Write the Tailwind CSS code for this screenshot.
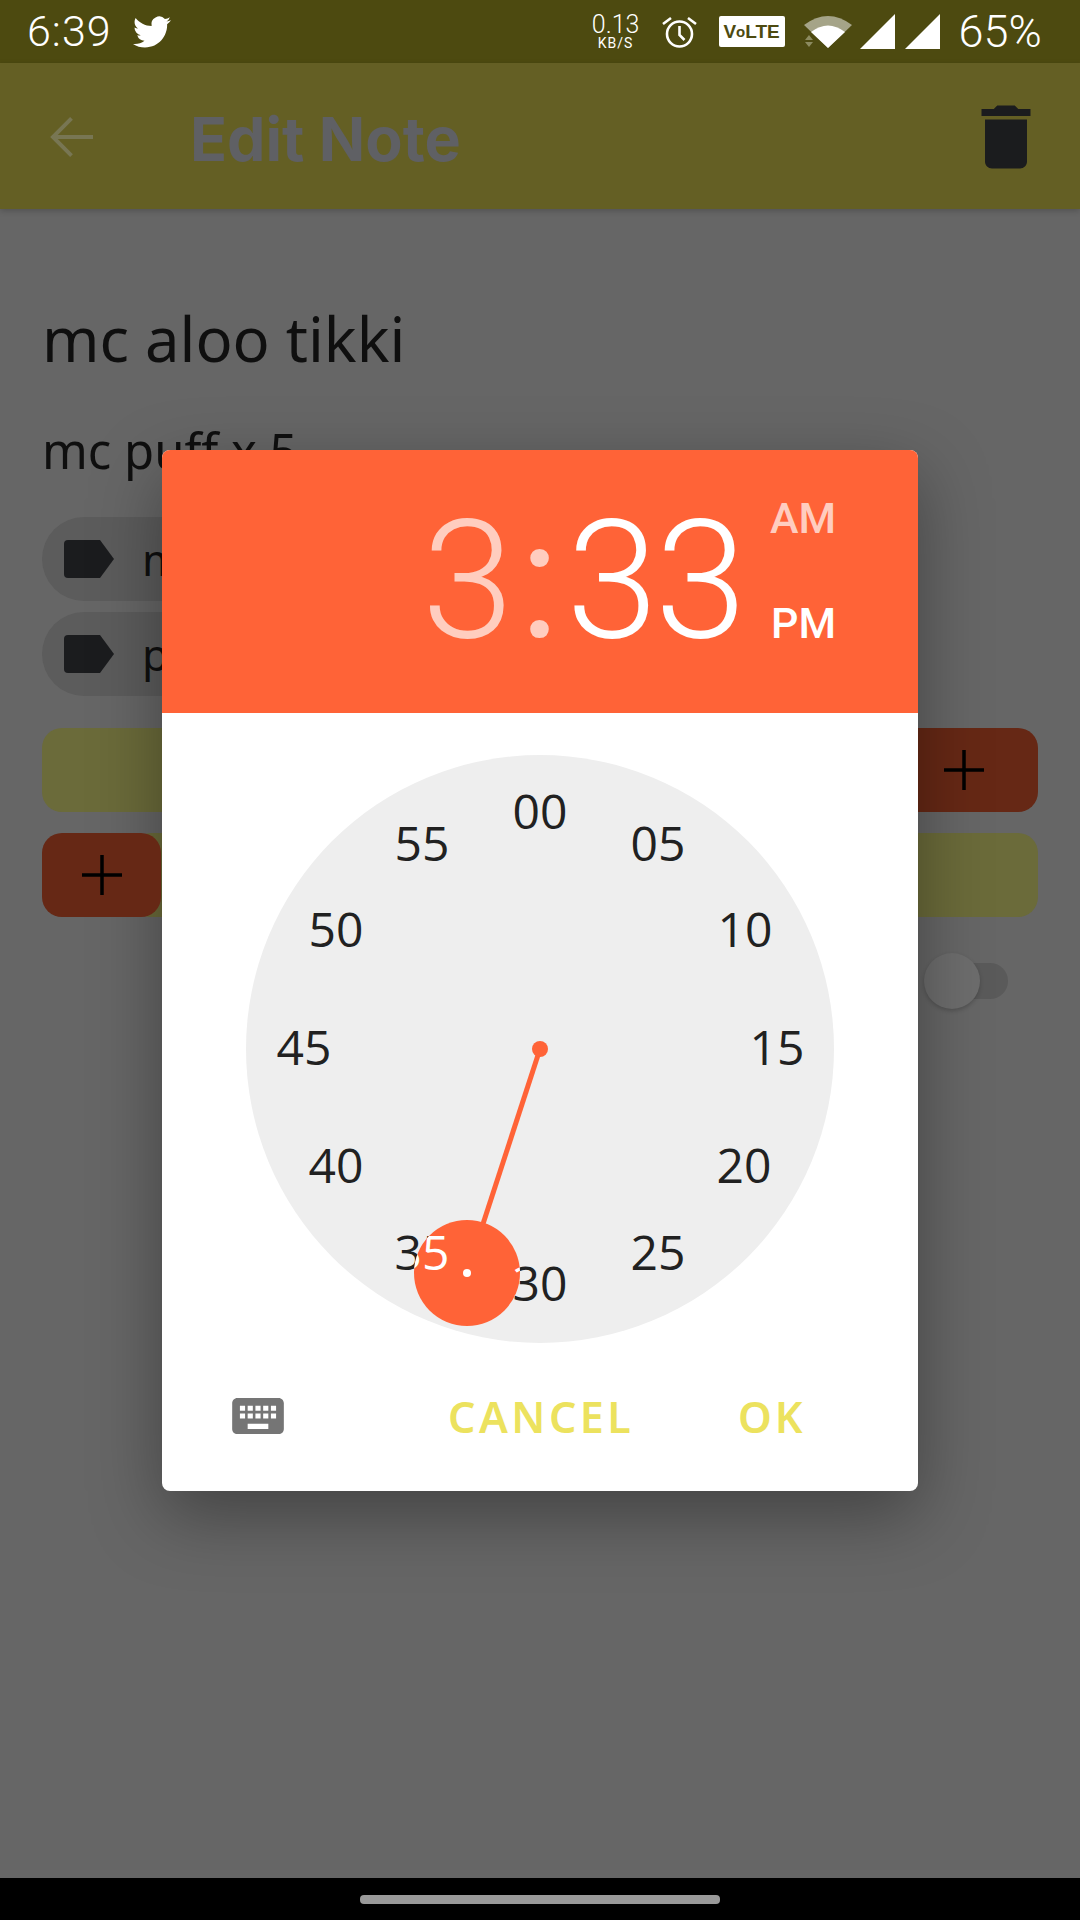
<!DOCTYPE html>
<html><head><meta charset="utf-8">
<script src="https://cdn.jsdelivr.net/npm/@tailwindcss/browser@4"></script>
</head>
<body class="m-0">
<div class="relative w-[1080px] h-[1920px] overflow-hidden bg-[#666666] flex flex-col font-['Noto_Sans',sans-serif]">
  <!-- status bar -->
  <div class="h-[63px] shrink-0 bg-[#4d4a10] flex items-center pl-[27px] text-white">
    <span class="font-['Roboto',sans-serif] text-[43px] leading-none tracking-[1px] font-light">6:39</span>
    <svg class="ml-[21px] w-[38px] h-[38px]" viewBox="0 0 24 24" fill="#fff"><path d="M23.953 4.57a10 10 0 01-2.825.775 4.958 4.958 0 002.163-2.723c-.951.555-2.005.959-3.127 1.184a4.92 4.92 0 00-8.384 4.482C7.69 8.095 4.067 6.13 1.64 3.162a4.822 4.822 0 00-.666 2.475c0 1.71.87 3.213 2.188 4.096a4.904 4.904 0 01-2.228-.616v.06a4.923 4.923 0 003.946 4.827 4.996 4.996 0 01-2.212.085 4.936 4.936 0 004.604 3.417 9.867 9.867 0 01-6.102 2.105c-.39 0-.779-.023-1.17-.067a13.995 13.995 0 007.557 2.209c9.053 0 13.998-7.496 13.998-13.985 0-.21 0-.42-.015-.63A9.935 9.935 0 0024 4.59z"/></svg>
    <div class="ml-[420px] w-[50px] flex flex-col items-center font-['Roboto',sans-serif] leading-none">
      <span class="text-[25px] leading-[22px] font-light">0.13</span>
      <span class="text-[14px] leading-[14px] tracking-[1px]">KB/S</span>
    </div>
    <svg class="ml-[20px] w-[37px] h-[34px]" viewBox="0 0 37 34" fill="none" stroke="#fff" stroke-width="2.6"><circle cx="18.5" cy="19" r="12.5"/><path d="M18.5 11v9l5 5M2 9l8-6M35 9l-8-6"/></svg>
    <div class="ml-[21px] w-[66px] h-[31px] bg-white rounded-[2px] flex items-center justify-center text-[#4d4a10] font-['Liberation_Sans',sans-serif] font-bold text-[19px] leading-none">
      <span>V</span><span class="text-[15px]">o</span><span>LTE</span>
    </div>
    <svg class="ml-[18px] w-[52px] h-[34px]" viewBox="0 0 52 34"><path d="M1 10 Q25 -8 49 10 L25 33Z" fill="#a5a488"/><path d="M8 17 Q25 4 42 17 L25 33Z" fill="#fff"/><path d="M2 25l4-5 4 5zM2 27l4 5 4-5z" fill="#8c8b60"/></svg>
    <svg class="ml-[5px] w-[35px] h-[35px]" viewBox="0 0 35 35"><path d="M0 35L35 0v35z" fill="#fff"/></svg>
    <svg class="ml-[10px] w-[35px] h-[35px]" viewBox="0 0 35 35"><path d="M0 35L35 0v35z" fill="#fff"/></svg>
    <span class="ml-[19px] font-['Roboto',sans-serif] text-[45px] leading-none font-light">65%</span>
  </div>
  <!-- app bar -->
  <div class="h-[146px] shrink-0 bg-[#645f24] flex items-center shadow-[0_2px_6px_rgba(0,0,0,0.2)] pl-[50px] pr-[48px]">
    <svg class="w-[43px] h-[42px] mt-[2px]" viewBox="0 0 44 42" fill="none" stroke="#787653" stroke-width="4"><path d="M44 21H3M22 2L3 21l19 19"/></svg>
    <span class="ml-[97px] mt-[6px] font-['Inter',sans-serif] font-bold text-[61px] leading-none text-[#5f6064]">Edit Note</span>
    <svg class="ml-auto w-[84px] h-[84px] -mr-[16px] mt-[2px]" viewBox="0 0 24 24" fill="#1b1c1e"><path d="M19 4h-3.5l-1-1h-5l-1 1H5v2h14V4zM6 19c0 1.1.9 2 2 2h8c1.1 0 2-.9 2-2V7H6v12z"/></svg>
  </div>
  <!-- note body, dimmed -->
  <div class="flex flex-col px-[42px] pt-[92px]">
    <div class="text-[61.5px] leading-[74px] text-[#0f0f0f]">mc aloo tikki</div>
    <div class="mt-[42px] text-[49px] leading-[66px] text-[#0f0f0f]">mc puff x 5</div>
    <div class="mt-[34px] flex flex-col gap-[11px] w-[400px]">
      <div class="h-[84px] rounded-[42px] bg-[#5c5c5c] flex items-center pl-[22px]">
        <svg class="w-[52px] h-[38px]" viewBox="0 0 52 38" fill="#1b1c1e"><path d="M4 0h32l14 19-14 19H4a4 4 0 01-4-4V4a4 4 0 014-4z"/></svg>
        <span class="ml-[26px] text-[44px] text-[#0f0f0f]">mc</span>
      </div>
      <div class="h-[84px] rounded-[42px] bg-[#5c5c5c] flex items-center pl-[22px]">
        <svg class="w-[52px] h-[38px]" viewBox="0 0 52 38" fill="#1b1c1e"><path d="M4 0h32l14 19-14 19H4a4 4 0 01-4-4V4a4 4 0 014-4z"/></svg>
        <span class="ml-[26px] text-[44px] text-[#0f0f0f]">puff</span>
      </div>
    </div>
    <div class="mt-[32px] flex h-[84px]">
      <div class="flex-1 rounded-[20px] bg-[#6b6b3a]"></div>
      <div class="w-[148px] rounded-[20px] bg-[#662815] flex items-center justify-center">
        <svg class="w-[40px] h-[40px]" viewBox="0 0 40 40" stroke="#000" stroke-width="3.5"><path d="M20 0v40M0 20h40"/></svg>
      </div>
    </div>
    <div class="mt-[21px] flex h-[84px]">
      <div class="relative z-10 w-[119px] rounded-[20px] bg-[#662815] flex items-center justify-center">
        <svg class="w-[40px] h-[40px]" viewBox="0 0 40 40" stroke="#000" stroke-width="3.5"><path d="M20 0v40M0 20h40"/></svg>
      </div>
      <div class="flex-1 -ml-[30px] rounded-[20px] bg-[#6b6b3a]"></div>
    </div>
    <div class="mt-[36px] self-end relative w-[84px] h-[56px] flex items-center mr-[30px]">
      <div class="ml-[26px] w-[58px] h-[36px] rounded-[18px] bg-[#5a5a5a]"></div>
      <div class="absolute left-0 top-0 w-[56px] h-[56px] rounded-full bg-[#6d6d6d] shadow-[0_2px_4px_rgba(0,0,0,0.2)]"></div>
    </div>
  </div>
  <!-- nav bar -->
  <div class="mt-auto h-[42px] shrink-0 bg-black flex items-center justify-center">
    <div class="w-[360px] h-[9px] rounded-[4px] bg-[#999999]"></div>
  </div>

  <!-- dialog -->
  <div class="absolute left-[162px] top-[450px] w-[756px] h-[1041px] rounded-[8px] overflow-hidden bg-white flex flex-col shadow-[0_24px_70px_rgba(0,0,0,0.35)]">
    <div class="relative h-[263px] shrink-0 bg-[#ff6337] font-['Roboto',sans-serif] text-white">
      <div class="absolute left-[260px] top-[36px] flex items-baseline text-[165px] leading-[190px] font-[350] tracking-[-3px]">
        <span class="text-[#ffcdbf]">3</span><span class="text-[#ffcdbf] ml-[9px] font-normal">:</span><span class="ml-[10px]">33</span>
      </div>
      <span class="absolute left-[608px] top-[44px] text-[43px] leading-[48px] font-medium text-[#ffcdbf]">AM</span>
      <span class="absolute left-[609px] top-[149px] text-[43px] leading-[48px] font-medium">PM</span>
    </div>
    <div class="relative flex-1">
      <!-- clock face -->
      <div class="absolute left-[84px] top-[42px] w-[588px] h-[588px] rounded-full bg-[#eeeeee] font-['Open_Sans',sans-serif] text-[48px] leading-[60px] text-[#212121]">
        <span class="absolute left-[244px] top-[26px] w-[100px] text-center">00</span>
        <span class="absolute left-[362px] top-[58px] w-[100px] text-center">05</span>
        <span class="absolute left-[449px] top-[144px] w-[100px] text-center">10</span>
        <span class="absolute left-[481px] top-[262px] w-[100px] text-center">15</span>
        <span class="absolute left-[448px] top-[380px] w-[100px] text-center">20</span>
        <span class="absolute left-[362px] top-[467px] w-[100px] text-center">25</span>
        <span class="absolute left-[244px] top-[498px] w-[100px] text-center">30</span>
        <span class="absolute left-[126px] top-[467px] w-[100px] text-center">35</span>
        <span class="absolute left-[40px] top-[380px] w-[100px] text-center">40</span>
        <span class="absolute left-[8px] top-[262px] w-[100px] text-center">45</span>
        <span class="absolute left-[40px] top-[144px] w-[100px] text-center">50</span>
        <span class="absolute left-[126px] top-[58px] w-[100px] text-center">55</span>
        <svg class="absolute left-0 top-0 w-[588px] h-[588px]" viewBox="0 0 588 588"><line x1="294" y1="294" x2="221" y2="518" stroke="#ff6337" stroke-width="5"/><circle cx="294" cy="294" r="8" fill="#ff6337"/></svg>
        <!-- selector, white copies of the numbers it covers -->
        <div class="absolute left-[168px] top-[465px] w-[106px] h-[106px] rounded-full bg-[#ff6337] overflow-hidden text-white">
          <span class="absolute left-[-42px] top-[2px] w-[100px] text-center">35</span>
          <span class="absolute left-[76px] top-[33px] w-[100px] text-center">30</span>
          <div class="absolute left-[49px] top-[49px] w-[8px] h-[8px] rounded-full bg-white"></div>
        </div>
      </div>
      <!-- actions -->
      <svg class="absolute left-[65px] top-[672px] w-[62px] h-[62px]" viewBox="0 0 24 24" fill="#757575"><path d="M20 5H4c-1.1 0-1.99.9-1.99 2L2 17c0 1.1.9 2 2 2h16c1.1 0 2-.9 2-2V7c0-1.1-.9-2-2-2zm-9 3h2v2h-2V8zm0 3h2v2h-2v-2zM8 8h2v2H8V8zm0 3h2v2H8v-2zm-1 2H5v-2h2v2zm0-3H5V8h2v2zm9 7H8v-2h8v2zm0-4h-2v-2h2v2zm0-3h-2V8h2v2zm3 3h-2v-2h2v2zm0-3h-2V8h2v2z"/></svg>
      <span class="absolute left-[286px] top-[679px] font-['Noto_Sans',sans-serif] font-semibold text-[43px] leading-[50px] tracking-[3.5px] text-[#ece25e]">CANCEL</span>
      <span class="absolute left-[576px] top-[679px] font-['Noto_Sans',sans-serif] font-semibold text-[43px] leading-[50px] tracking-[3px] text-[#ece25e]">OK</span>
    </div>
  </div>
</div>
</body></html>
